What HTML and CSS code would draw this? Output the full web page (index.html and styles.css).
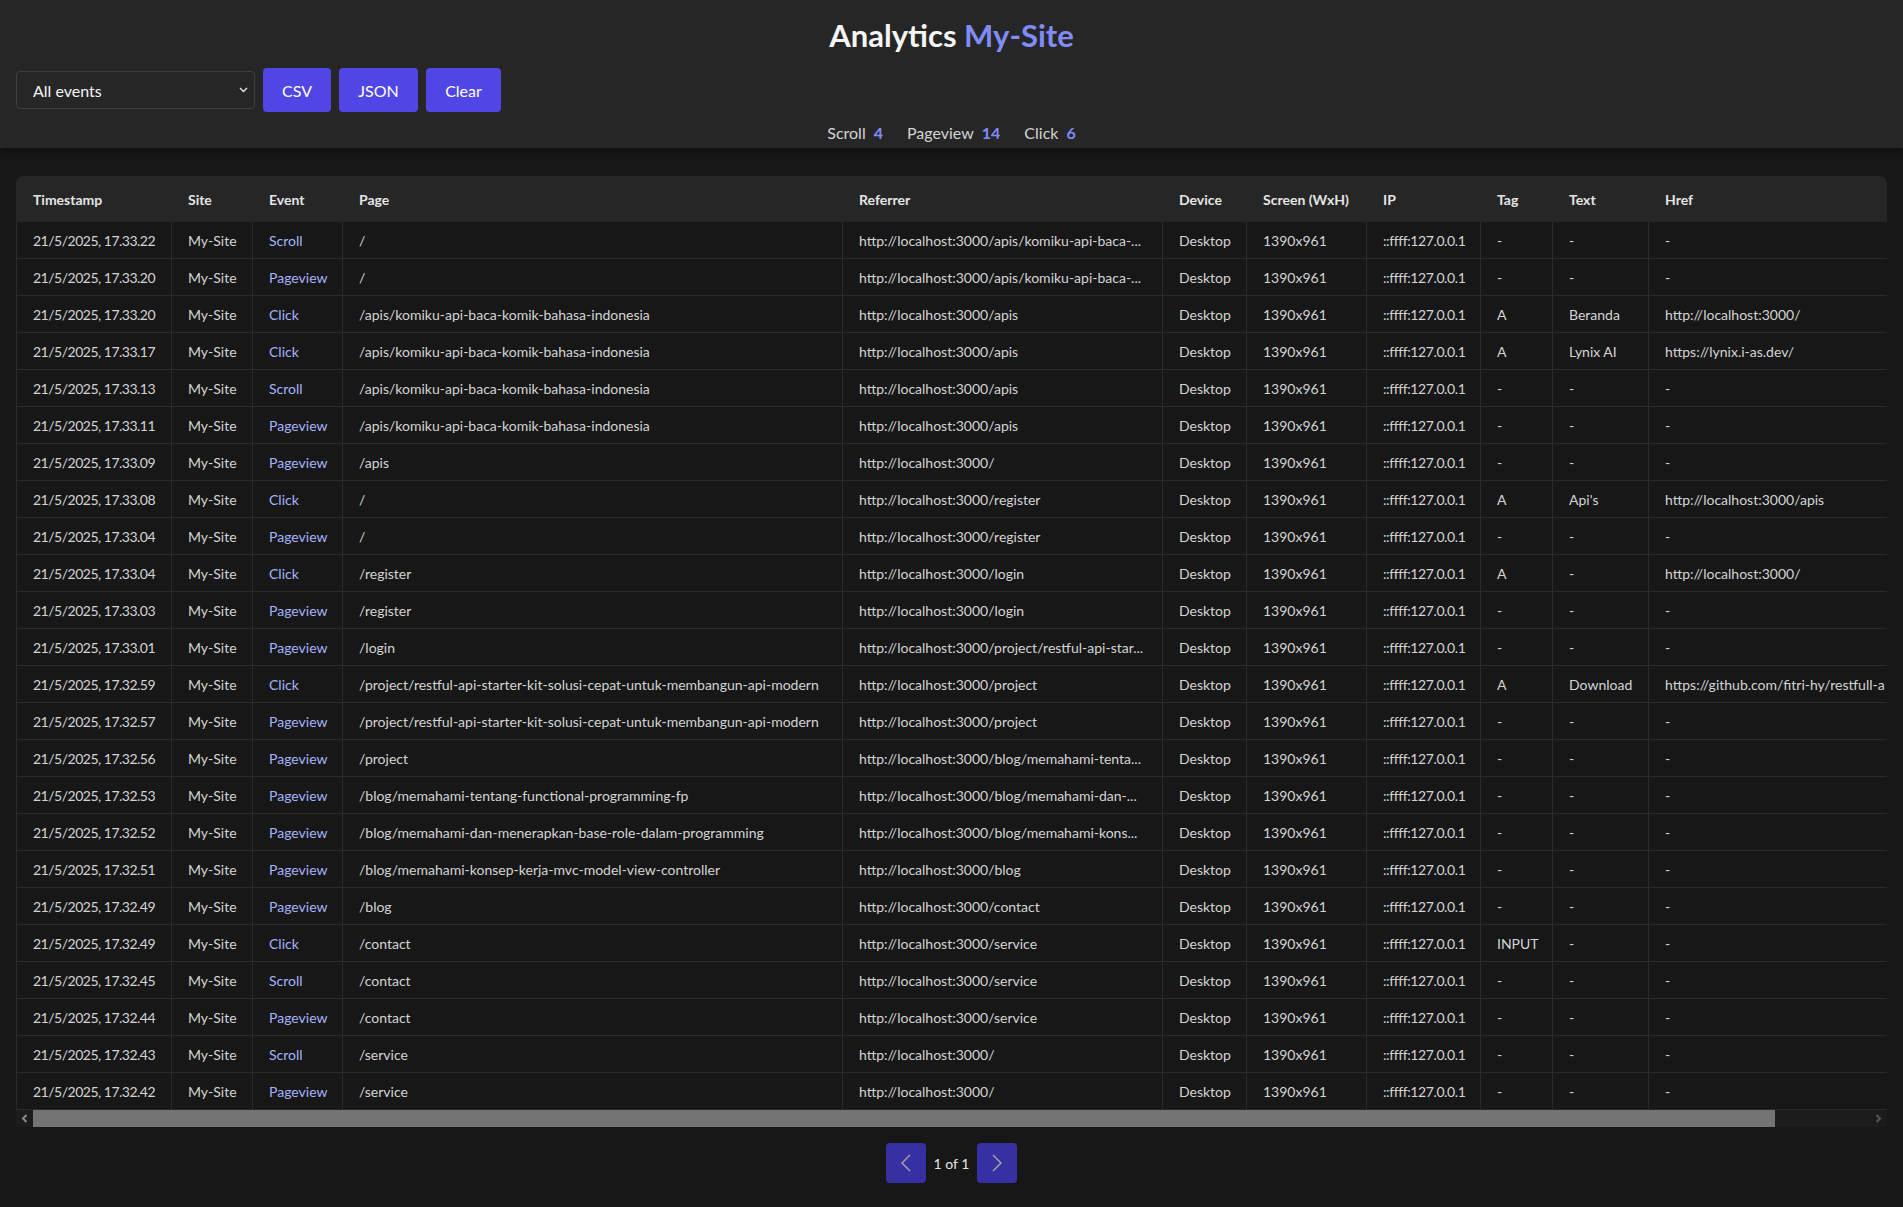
FILE: index.html
```html
<!DOCTYPE html>
<html lang="id">
<head>
<meta charset="utf-8">
<title>Analytics My-Site</title>
<link rel="stylesheet" href="styles.css">
</head>
<body>
<header class="topbar">
  <h1 class="title">Analytics <span class="site">My-Site</span></h1>
  <div class="controls">
    <div class="select-wrap">
      <select class="select">
        <option>All events</option>
        <option>Pageview</option>
        <option>Click</option>
        <option>Scroll</option>
      </select>
      <svg class="select-caret" width="9" height="6" viewBox="0 0 9 6"><polyline points="1,1 4.5,4.5 8,1" fill="none" stroke="#e5e5e5" stroke-width="1.4"/></svg>
    </div>
    <button class="btn btn-csv">CSV</button>
    <button class="btn btn-json">JSON</button>
    <button class="btn btn-clear">Clear</button>
  </div>
  <div class="stats">
    <span class="stat">Scroll<b class="stat-count">4</b></span>
    <span class="stat">Pageview<b class="stat-count">14</b></span>
    <span class="stat">Click<b class="stat-count">6</b></span>
  </div>
</header>

<main class="main">
  <div class="table-wrap">
    <table class="events">
      <colgroup>
        <col class="c-ts"><col class="c-site"><col class="c-ev"><col class="c-page"><col class="c-ref"><col class="c-dev"><col class="c-scr"><col class="c-ip"><col class="c-tag"><col class="c-text"><col class="c-href">
      </colgroup>
      <thead>
        <tr><th>Timestamp</th><th>Site</th><th>Event</th><th>Page</th><th>Referrer</th><th>Device</th><th>Screen (WxH)</th><th>IP</th><th>Tag</th><th>Text</th><th>Href</th></tr>
      </thead>
      <tbody>
        <tr><td>21/5/2025, 17.33.22</td><td>My-Site</td><td class="ev">Scroll</td><td>/</td><td>http://localhost:3000/apis/komiku-api-baca-...</td><td>Desktop</td><td>1390x961</td><td>::ffff:127.0.0.1</td><td>-</td><td>-</td><td>-</td></tr>
        <tr><td>21/5/2025, 17.33.20</td><td>My-Site</td><td class="ev">Pageview</td><td>/</td><td>http://localhost:3000/apis/komiku-api-baca-...</td><td>Desktop</td><td>1390x961</td><td>::ffff:127.0.0.1</td><td>-</td><td>-</td><td>-</td></tr>
        <tr><td>21/5/2025, 17.33.20</td><td>My-Site</td><td class="ev">Click</td><td>/apis/komiku-api-baca-komik-bahasa-indonesia</td><td>http://localhost:3000/apis</td><td>Desktop</td><td>1390x961</td><td>::ffff:127.0.0.1</td><td>A</td><td>Beranda</td><td>http://localhost:3000/</td></tr>
        <tr><td>21/5/2025, 17.33.17</td><td>My-Site</td><td class="ev">Click</td><td>/apis/komiku-api-baca-komik-bahasa-indonesia</td><td>http://localhost:3000/apis</td><td>Desktop</td><td>1390x961</td><td>::ffff:127.0.0.1</td><td>A</td><td>Lynix AI</td><td>https://lynix.i-as.dev/</td></tr>
        <tr><td>21/5/2025, 17.33.13</td><td>My-Site</td><td class="ev">Scroll</td><td>/apis/komiku-api-baca-komik-bahasa-indonesia</td><td>http://localhost:3000/apis</td><td>Desktop</td><td>1390x961</td><td>::ffff:127.0.0.1</td><td>-</td><td>-</td><td>-</td></tr>
        <tr><td>21/5/2025, 17.33.11</td><td>My-Site</td><td class="ev">Pageview</td><td>/apis/komiku-api-baca-komik-bahasa-indonesia</td><td>http://localhost:3000/apis</td><td>Desktop</td><td>1390x961</td><td>::ffff:127.0.0.1</td><td>-</td><td>-</td><td>-</td></tr>
        <tr><td>21/5/2025, 17.33.09</td><td>My-Site</td><td class="ev">Pageview</td><td>/apis</td><td>http://localhost:3000/</td><td>Desktop</td><td>1390x961</td><td>::ffff:127.0.0.1</td><td>-</td><td>-</td><td>-</td></tr>
        <tr><td>21/5/2025, 17.33.08</td><td>My-Site</td><td class="ev">Click</td><td>/</td><td>http://localhost:3000/register</td><td>Desktop</td><td>1390x961</td><td>::ffff:127.0.0.1</td><td>A</td><td>Api's</td><td>http://localhost:3000/apis</td></tr>
        <tr><td>21/5/2025, 17.33.04</td><td>My-Site</td><td class="ev">Pageview</td><td>/</td><td>http://localhost:3000/register</td><td>Desktop</td><td>1390x961</td><td>::ffff:127.0.0.1</td><td>-</td><td>-</td><td>-</td></tr>
        <tr><td>21/5/2025, 17.33.04</td><td>My-Site</td><td class="ev">Click</td><td>/register</td><td>http://localhost:3000/login</td><td>Desktop</td><td>1390x961</td><td>::ffff:127.0.0.1</td><td>A</td><td>-</td><td>http://localhost:3000/</td></tr>
        <tr><td>21/5/2025, 17.33.03</td><td>My-Site</td><td class="ev">Pageview</td><td>/register</td><td>http://localhost:3000/login</td><td>Desktop</td><td>1390x961</td><td>::ffff:127.0.0.1</td><td>-</td><td>-</td><td>-</td></tr>
        <tr><td>21/5/2025, 17.33.01</td><td>My-Site</td><td class="ev">Pageview</td><td>/login</td><td>http://localhost:3000/project/restful-api-star...</td><td>Desktop</td><td>1390x961</td><td>::ffff:127.0.0.1</td><td>-</td><td>-</td><td>-</td></tr>
        <tr><td>21/5/2025, 17.32.59</td><td>My-Site</td><td class="ev">Click</td><td>/project/restful-api-starter-kit-solusi-cepat-untuk-membangun-api-modern</td><td>http://localhost:3000/project</td><td>Desktop</td><td>1390x961</td><td>::ffff:127.0.0.1</td><td>A</td><td>Download</td><td>https://github.com/fitri-hy/restfull-a</td></tr>
        <tr><td>21/5/2025, 17.32.57</td><td>My-Site</td><td class="ev">Pageview</td><td>/project/restful-api-starter-kit-solusi-cepat-untuk-membangun-api-modern</td><td>http://localhost:3000/project</td><td>Desktop</td><td>1390x961</td><td>::ffff:127.0.0.1</td><td>-</td><td>-</td><td>-</td></tr>
        <tr><td>21/5/2025, 17.32.56</td><td>My-Site</td><td class="ev">Pageview</td><td>/project</td><td>http://localhost:3000/blog/memahami-tenta...</td><td>Desktop</td><td>1390x961</td><td>::ffff:127.0.0.1</td><td>-</td><td>-</td><td>-</td></tr>
        <tr><td>21/5/2025, 17.32.53</td><td>My-Site</td><td class="ev">Pageview</td><td>/blog/memahami-tentang-functional-programming-fp</td><td>http://localhost:3000/blog/memahami-dan-...</td><td>Desktop</td><td>1390x961</td><td>::ffff:127.0.0.1</td><td>-</td><td>-</td><td>-</td></tr>
        <tr><td>21/5/2025, 17.32.52</td><td>My-Site</td><td class="ev">Pageview</td><td>/blog/memahami-dan-menerapkan-base-role-dalam-programming</td><td>http://localhost:3000/blog/memahami-kons...</td><td>Desktop</td><td>1390x961</td><td>::ffff:127.0.0.1</td><td>-</td><td>-</td><td>-</td></tr>
        <tr><td>21/5/2025, 17.32.51</td><td>My-Site</td><td class="ev">Pageview</td><td>/blog/memahami-konsep-kerja-mvc-model-view-controller</td><td>http://localhost:3000/blog</td><td>Desktop</td><td>1390x961</td><td>::ffff:127.0.0.1</td><td>-</td><td>-</td><td>-</td></tr>
        <tr><td>21/5/2025, 17.32.49</td><td>My-Site</td><td class="ev">Pageview</td><td>/blog</td><td>http://localhost:3000/contact</td><td>Desktop</td><td>1390x961</td><td>::ffff:127.0.0.1</td><td>-</td><td>-</td><td>-</td></tr>
        <tr><td>21/5/2025, 17.32.49</td><td>My-Site</td><td class="ev">Click</td><td>/contact</td><td>http://localhost:3000/service</td><td>Desktop</td><td>1390x961</td><td>::ffff:127.0.0.1</td><td>INPUT</td><td>-</td><td>-</td></tr>
        <tr><td>21/5/2025, 17.32.45</td><td>My-Site</td><td class="ev">Scroll</td><td>/contact</td><td>http://localhost:3000/service</td><td>Desktop</td><td>1390x961</td><td>::ffff:127.0.0.1</td><td>-</td><td>-</td><td>-</td></tr>
        <tr><td>21/5/2025, 17.32.44</td><td>My-Site</td><td class="ev">Pageview</td><td>/contact</td><td>http://localhost:3000/service</td><td>Desktop</td><td>1390x961</td><td>::ffff:127.0.0.1</td><td>-</td><td>-</td><td>-</td></tr>
        <tr><td>21/5/2025, 17.32.43</td><td>My-Site</td><td class="ev">Scroll</td><td>/service</td><td>http://localhost:3000/</td><td>Desktop</td><td>1390x961</td><td>::ffff:127.0.0.1</td><td>-</td><td>-</td><td>-</td></tr>
        <tr><td>21/5/2025, 17.32.42</td><td>My-Site</td><td class="ev">Pageview</td><td>/service</td><td>http://localhost:3000/</td><td>Desktop</td><td>1390x961</td><td>::ffff:127.0.0.1</td><td>-</td><td>-</td><td>-</td></tr>
      </tbody>
    </table>
  </div>
  <div class="hscroll">
    <div class="sb-btn"><svg width="7" height="9" viewBox="0 0 7 9"><polyline points="5.5,1 2,4.5 5.5,8" fill="none" stroke="#8a8a8a" stroke-width="2"/></svg></div>
    <div class="sb-track"><div class="sb-thumb"></div></div>
    <div class="sb-btn"><svg width="7" height="9" viewBox="0 0 7 9"><polyline points="1.5,1 5,4.5 1.5,8" fill="none" stroke="#555555" stroke-width="2"/></svg></div>
  </div>
  <nav class="pager">
    <button class="pg-btn" aria-label="Previous"><svg width="10" height="18" viewBox="0 0 10 18"><polyline points="9,1 1,9 9,17" fill="none" stroke="#a3a3a3" stroke-width="1.5"/></svg></button>
    <span class="pg-text">1 of 1</span>
    <button class="pg-btn" aria-label="Next"><svg width="10" height="18" viewBox="0 0 10 18"><polyline points="1,1 9,9 1,17" fill="none" stroke="#a3a3a3" stroke-width="1.5"/></svg></button>
  </nav>
</main>
</body>
</html>
```

FILE: styles.css
```css
* { box-sizing: border-box; }

body {
  margin: 0;
  background: #171717;
  color: #d4d4d4;
  font-family: Lato, "Liberation Sans", sans-serif;
}

.topbar {
  background: #262626;
  padding: 17px 16px 3px;
  box-shadow: 0 4px 8px rgba(0, 0, 0, 0.4);
}

.title {
  margin: 0;
  text-align: center;
  font-size: 31px;
  line-height: 36px;
  font-weight: 700;
  color: #f5f5f5;
}
.title .site { color: #818cf8; }

.controls {
  display: flex;
  align-items: center;
  gap: 8px;
  margin-top: 15px;
  height: 44px;
}

.select-wrap {
  position: relative;
  width: 239px;
  height: 38px;
}
.select {
  width: 100%;
  height: 100%;
  appearance: none;
  -webkit-appearance: none;
  background: #262626;
  border: 1px solid #3f3f3f;
  border-radius: 4px;
  color: #f5f5f5;
  font-family: inherit;
  font-size: 16px;
  padding: 0 24px 0 16px;
  outline: none;
}
.select-caret {
  position: absolute;
  right: 7px;
  top: 16px;
  pointer-events: none;
}

.btn {
  height: 44px;
  padding: 0 16px;
  background: #4f46e5;
  border: none;
  border-radius: 4px;
  color: #ffffff;
  font-family: inherit;
  font-size: 16px;
}
.btn-csv { width: 68px; }
.btn-json { width: 79px; }
.btn-clear { width: 75px; }

.stats {
  display: flex;
  justify-content: center;
  gap: 24px;
  margin-top: 9px;
  font-size: 16px;
  line-height: 24px;
  color: #d4d4d4;
}
.stat-count {
  margin-left: 8px;
  color: #818cf8;
  font-weight: 700;
}

.main {
  padding: 28px 16px 25px;
}

.table-wrap {
  overflow: hidden;
  border-radius: 8px 8px 0 0;
}

.events {
  border-collapse: separate;
  border-spacing: 0;
  table-layout: fixed;
  width: 1973px;
  font-size: 14px;
  line-height: 20px;
}

.c-ts { width: 156px; }
.c-site { width: 81px; }
.c-ev { width: 90px; }
.c-page { width: 500px; }
.c-ref { width: 320px; }
.c-dev { width: 84px; }
.c-scr { width: 120px; }
.c-ip { width: 114px; }
.c-tag { width: 72px; }
.c-text { width: 96px; }
.c-href { width: 340px; }

.events th {
  background: #262626;
  color: #e5e5e5;
  font-weight: 700;
  text-align: left;
  padding: 14px 16px 12px;
  white-space: nowrap;
}
.events th:first-child { padding-left: 17px; }

.events td {
  padding: 9px 16px 7px;
  border-right: 1px solid #2b2b2b;
  border-bottom: 1px solid #2b2b2b;
  white-space: nowrap;
  overflow: visible;
  color: #d4d4d4;
}
.events td:first-child { border-left: 1px solid #2b2b2b; }
.events td:nth-child(1) { letter-spacing: -0.5px; }
.events td:nth-child(8) { letter-spacing: -0.4px; }
.events td.ev { color: #a5b4fc; }

.hscroll {
  display: flex;
  height: 17px;
  background: #1c1c1c;
}
.sb-btn {
  width: 17px;
  display: flex;
  align-items: center;
  justify-content: center;
}
.sb-track { flex: 1; }
.sb-thumb {
  width: 94.83%;
  height: 100%;
  background: #737373;
}

.pager {
  display: flex;
  justify-content: center;
  align-items: center;
  gap: 8px;
  margin-top: 16px;
}
.pg-btn {
  width: 40px;
  height: 40px;
  background: #3730a3;
  border: none;
  border-radius: 4px;
  display: flex;
  align-items: center;
  justify-content: center;
  padding: 0;
}
.pg-text {
  font-size: 14px;
  color: #e5e5e5;
}
```
